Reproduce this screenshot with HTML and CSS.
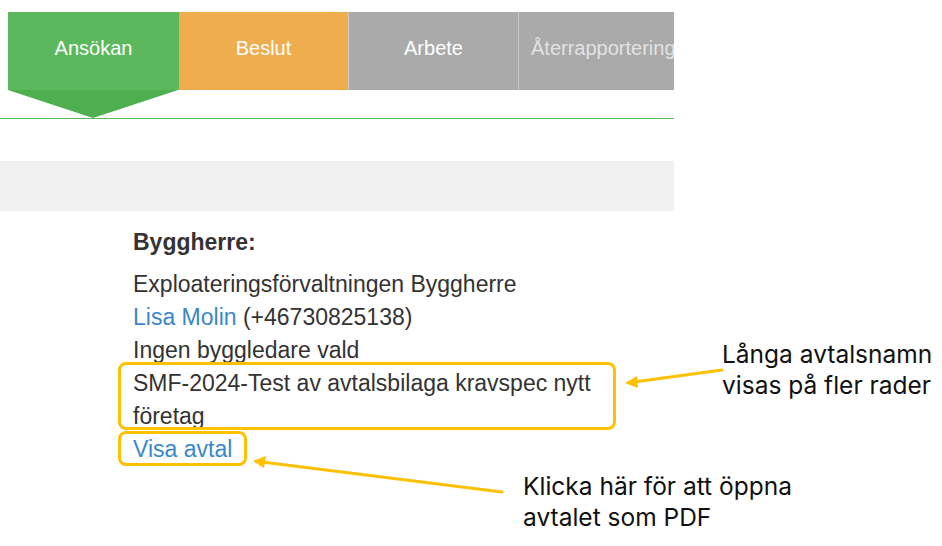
FILE: index.html
```html
<!DOCTYPE html>
<html lang="sv">
<head>
<meta charset="utf-8">
<title>Byggherre</title>
<link rel="stylesheet" href="styles.css">
</head>
<body>
<div class="page">
  <div class="main">
    <nav class="steps">
      <div class="step step-active">Ansökan<span class="pointer"></span></div>
      <div class="step step-warn">Beslut</div>
      <div class="step step-gray">Arbete</div>
      <div class="step step-gray step-dim">Återrapportering</div>
    </nav>
    <div class="rule"></div>
    <div class="band"></div>
    <section class="info">
      <h3 class="info-title">Byggherre:</h3>
      <div class="line">Exploateringsförvaltningen Byggherre</div>
      <div class="line"><a class="link" href="#">Lisa Molin</a> (+46730825138)</div>
      <div class="line">Ingen byggledare vald</div>
      <div class="line">SMF-2024-Test av avtalsbilaga kravspec nytt företag</div>
      <div class="line"><a class="link" href="#">Visa avtal</a></div>
    </section>
  </div>

  <div class="hl hl-name"></div>
  <div class="hl hl-link"></div>

  <svg class="arrows" width="942" height="546" viewBox="0 0 942 546">
    <g stroke="#ffc000" stroke-width="3" stroke-linecap="round">
      <line x1="722" y1="370" x2="634" y2="382"/>
      <line x1="502" y1="492" x2="262" y2="462"/>
    </g>
    <polygon points="625,383 637,376 638,388" fill="#ffc000"/>
    <polygon points="253,461 266,456 264,468" fill="#ffc000"/>
  </svg>

  <div class="note note-1">Långa avtalsnamn<br>visas på fler rader</div>
  <div class="note note-2">Klicka här för att öppna<br>avtalet som PDF</div>
</div>
</body>
</html>
```

FILE: styles.css
```css
html, body {
  margin: 0;
  padding: 0;
  background: #ffffff;
}
.page {
  position: relative;
  width: 942px;
  height: 546px;
  overflow: hidden;
  font-family: "Liberation Sans", Arial, sans-serif;
}
.main {
  width: 674px;
  padding-top: 12px;
}
.steps {
  display: flex;
  padding-left: 8px;
  height: 78px;
  overflow: hidden;
}
.steps:has(.pointer) {
  overflow: visible;
}
.step {
  position: relative;
  flex: 0 0 170px;
  display: flex;
  align-items: center;
  justify-content: center;
  color: #ffffff;
  font-size: 20px;
  padding-bottom: 6px;
  box-sizing: border-box;
  white-space: nowrap;
}
.step-active {
  flex-basis: 171px;
  background: #5cb85c;
}
.step-warn {
  flex-basis: 169px;
  background: #f0ad4e;
}
.step-gray {
  background: #aaaaaa;
  border-left: 1px solid #c9c9c9;
}
.step-dim {
  flex: 1 1 auto;
  color: #e2e2e2;
  justify-content: flex-start;
  padding-left: 12px;
  overflow: hidden;
}
.pointer {
  position: absolute;
  left: 0;
  top: 78px;
  width: 0;
  height: 0;
  border-left: 85.5px solid transparent;
  border-right: 85.5px solid transparent;
  border-top: 28px solid #4daf4d;
}
.rule {
  margin-top: 28px;
  height: 1px;
  background: #5cb85c;
}
.band {
  margin-top: 42px;
  height: 50px;
  background: #f0f0f0;
}
.info {
  padding-left: 133px;
  padding-top: 15px;
  color: #333333;
  font-size: 23px;
  line-height: 33px;
}
.info-title {
  margin: 0 0 9px 0;
  font-size: 23px;
  font-weight: bold;
  line-height: 33px;
}
.line {
  width: 480px;
}
.link {
  color: #3a87c9;
  text-decoration: none;
}
.hl {
  position: absolute;
  border: 3px solid #ffc000;
  border-radius: 8px;
  box-sizing: border-box;
}
.hl-name {
  left: 118px;
  top: 362px;
  width: 498px;
  height: 68px;
}
.hl-link {
  left: 118px;
  top: 431px;
  width: 129px;
  height: 35px;
}
.arrows {
  position: absolute;
  left: 0;
  top: 0;
}
.note {
  position: absolute;
  font-family: Inter, "Noto Sans", sans-serif;
  font-size: 24.5px;
  line-height: 31px;
  color: #111111;
}
.note-1 {
  left: 722px;
  top: 339px;
}
.note-2 {
  left: 523px;
  top: 471px;
}
```
